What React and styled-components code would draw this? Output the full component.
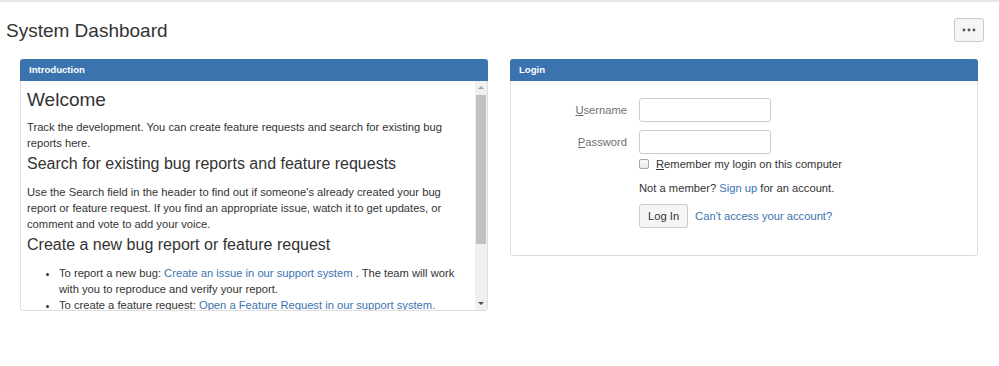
import React from "react";
import styled, { createGlobalStyle } from "styled-components";

const GlobalStyle = createGlobalStyle`
  html, body {
    margin: 0;
    padding: 0;
    background: #fff;
  }
  body {
    font-family: "Liberation Sans", Arial, sans-serif;
    font-size: 11.2px;
    line-height: 16px;
    color: #333;
  }
`;

const Page = styled.div`
  border-top: 2px solid #e6e6e6;
  min-height: 364px;
`;

const PageHeader = styled.header`
  display: flex;
  align-items: center;
  justify-content: space-between;
  height: 24px;
  margin-top: 16px;
  padding: 0 15px 0 6px;
`;

const Title = styled.h1`
  margin: 0;
  font-size: 19px;
  line-height: 23px;
  font-weight: normal;
  color: #333;
`;

const MoreButton = styled.button`
  display: flex;
  align-items: center;
  justify-content: center;
  width: 30px;
  height: 24px;
  padding: 0;
  background: #f5f5f5;
  border: 1px solid #ccc;
  border-radius: 3px;
  cursor: pointer;
`;

const Columns = styled.div`
  display: grid;
  grid-template-columns: 468px 468px;
  column-gap: 22px;
  align-items: start;
  margin-top: 17px;
  padding-left: 20px;
`;

const Panel = styled.section`
  border-radius: 3px;
  overflow: hidden;
`;

const PanelHeader = styled.div`
  height: 22px;
  box-sizing: border-box;
  padding: 0 9px;
  background: #3b73af;
  color: #fff;
  font-size: 9.6px;
  font-weight: bold;
  line-height: 22px;
`;

const PanelBody = styled.div`
  border: 1px solid #ddd;
  border-top: none;
  border-radius: 0 0 3px 3px;
`;

const IntroBody = styled(PanelBody)`
  display: flex;
  height: 229px;
`;

const IntroContent = styled.div`
  flex: 1;
  min-width: 0;
  overflow: hidden;
  padding: 7px 6px 0 6px;
`;

const ScrollRail = styled.div`
  width: 12px;
  flex: none;
  display: flex;
  flex-direction: column;
  background: #f0f0f0;
`;

const ScrollArrow = styled.div`
  height: 13px;
  display: flex;
  align-items: center;
  justify-content: center;

  &::before {
    content: "";
    width: 0;
    height: 0;
    border-left: 3px solid transparent;
    border-right: 3px solid transparent;
    ${(p) =>
      p.$down
        ? "border-top: 3px solid #505050;"
        : "border-bottom: 3px solid #a3a3a3;"}
  }
`;

const ScrollThumb = styled.div`
  height: 149px;
  margin: 1px 1px 0;
  background: #c1c1c1;
`;

const ScrollSpace = styled.div`
  flex: 1;
`;

const Heading = styled.h2`
  margin: 0 0 ${(p) => (p.$big ? "8px" : "10px")};
  font-size: ${(p) => (p.$big ? "19px" : "16px")};
  line-height: ${(p) => (p.$big ? "23px" : "20px")};
  font-weight: normal;
  color: #333;
`;

const Para = styled.p`
  margin: 0 0 3px;
`;

const List = styled.ul`
  margin: 0 0 10px;
  padding-left: 32px;
`;

const Link = styled.a`
  color: #3b73af;
  text-decoration: none;
  cursor: pointer;
`;

const LoginBody = styled(PanelBody)`
  padding: 17px 0 27px;
  display: flex;
  flex-direction: column;
`;

const FieldRow = styled.div`
  display: flex;
  align-items: center;
  margin-bottom: ${(p) => p.$gap || "0"};
`;

const Label = styled.label`
  width: 116px;
  margin-right: 12px;
  text-align: right;
  color: #707070;
`;

const Key = styled.span`
  text-decoration: underline;
`;

const TextInput = styled.input`
  width: 132px;
  height: 24px;
  box-sizing: border-box;
  border: 1px solid #ccc;
  border-radius: 3px;
  padding: 2px 5px;
  font: inherit;
`;

const Indented = styled.div`
  display: flex;
  align-items: center;
  margin-left: 128px;
  margin-bottom: ${(p) => p.$gap || "0"};
  line-height: 16px;
`;

const Checkbox = styled.span`
  display: inline-block;
  width: 10px;
  height: 10px;
  box-sizing: border-box;
  border: 1px solid #a6a6a6;
  border-radius: 2px;
  background: linear-gradient(#fafafa, #e8e8e8);
  margin-right: 7px;
`;

const Button = styled.button`
  height: 24px;
  padding: 0 8px;
  background: #f5f5f5;
  border: 1px solid #ccc;
  border-radius: 3px;
  font: inherit;
  color: #333;
  margin-right: 7px;
  cursor: pointer;
`;

const Dots = () => (
  <svg width="14" height="4" viewBox="0 0 14 4">
    <circle cx="2" cy="2" r="1.4" fill="#555" />
    <circle cx="7" cy="2" r="1.4" fill="#555" />
    <circle cx="12" cy="2" r="1.4" fill="#555" />
  </svg>
);

const App = () => (
  <>
    <GlobalStyle />
    <Page>
      <PageHeader>
        <Title>System Dashboard</Title>
        <MoreButton aria-label="More">
          <Dots />
        </MoreButton>
      </PageHeader>

      <Columns>
        <Panel>
          <PanelHeader>Introduction</PanelHeader>
          <IntroBody>
            <IntroContent>
              <Heading $big>Welcome</Heading>
              <Para>
                Track the development. You can create feature requests and
                search for existing bug reports here.
              </Para>
              <Heading>Search for existing bug reports and feature requests</Heading>
              <Para>
                Use the Search field in the header to find out if someone's
                already created your bug report or feature request. If you find
                an appropriate issue, watch it to get updates, or comment and
                vote to add your voice.
              </Para>
              <Heading>Create a new bug report or feature request</Heading>
              <List>
                <li>
                  To report a new bug:{" "}
                  <Link>Create an issue in our support system</Link> . The team
                  will work with you to reproduce and verify your report.
                </li>
                <li>
                  To create a feature request:{" "}
                  <Link>Open a Feature Request in our support system.</Link>
                </li>
              </List>
            </IntroContent>
            <ScrollRail>
              <ScrollArrow />
              <ScrollThumb />
              <ScrollSpace />
              <ScrollArrow $down />
            </ScrollRail>
          </IntroBody>
        </Panel>

        <Panel>
          <PanelHeader>Login</PanelHeader>
          <LoginBody>
            <FieldRow $gap="8px">
              <Label htmlFor="user">
                <Key>U</Key>sername
              </Label>
              <TextInput id="user" type="text" />
            </FieldRow>
            <FieldRow $gap="2px">
              <Label htmlFor="pass">
                <Key>P</Key>assword
              </Label>
              <TextInput id="pass" type="password" />
            </FieldRow>
            <Indented $gap="8px">
              <Checkbox />
              <span>
                <Key>R</Key>emember my login on this computer
              </span>
            </Indented>
            <Indented $gap="8px">
              <span>
                Not a member? <Link>Sign up</Link> for an account.
              </span>
            </Indented>
            <Indented>
              <Button>Log In</Button>
              <Link>Can't access your account?</Link>
            </Indented>
          </LoginBody>
        </Panel>
      </Columns>
    </Page>
  </>
);

export default App;
